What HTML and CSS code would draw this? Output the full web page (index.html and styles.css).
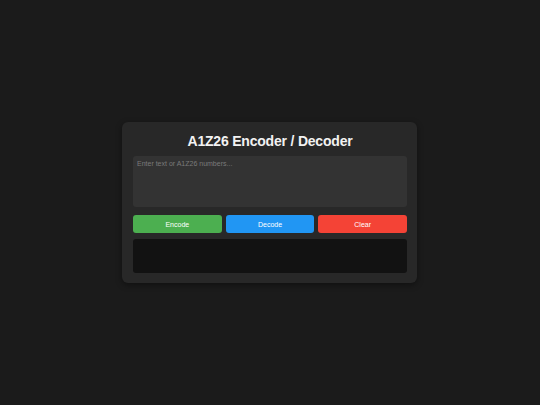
FILE: index.html
```html
<!DOCTYPE html>
<html>
<head>
<meta charset="utf-8">
<link rel="stylesheet" href="styles.css">
</head>
<body>
<div class="card">
  <h1 class="title">A1Z26 Encoder / Decoder</h1>
  <textarea class="input" placeholder="Enter text or A1Z26 numbers..."></textarea>
  <div class="buttons">
    <button class="btn btn-encode">Encode</button>
    <button class="btn btn-decode">Decode</button>
    <button class="btn btn-clear">Clear</button>
  </div>
  <div class="output"></div>
</div>
</body>
</html>
```
FILE: styles.css
```css
html, body {
  margin: 0;
  height: 100%;
}
body {
  background: #1b1b1b;
  font-family: "Liberation Sans", Arial, sans-serif;
  display: flex;
  align-items: center;
  justify-content: center;
}
.card {
  width: 295px;
  margin-right: 1px;
  box-sizing: border-box;
  padding: 10px 10px 10px 11px;
  background: #282828;
  border-radius: 6px;
  box-shadow: 0 2px 6px rgba(0,0,0,0.4);
  display: flex;
  flex-direction: column;
}
.title {
  margin: 0 0 6px;
  font-size: 14px;
  line-height: 18px;
  letter-spacing: -0.2px;
  font-weight: bold;
  color: #f2f2f2;
  text-align: center;
}
.input {
  height: 51px;
  box-sizing: border-box;
  resize: none;
  border: none;
  border-radius: 3px;
  background: #333333;
  color: #eee;
  padding: 4px 4px;
  font-family: "Liberation Sans", Arial, sans-serif;
  font-size: 7px;
  outline: none;
  margin: 0;
}
.input::placeholder {
  color: #7a7a7a;
}
.buttons {
  display: flex;
  gap: 4px;
  margin-top: 8px;
}
.btn {
  flex: 1;
  height: 18px;
  border: none;
  border-radius: 3px;
  color: #fff;
  font-family: "Liberation Sans", Arial, sans-serif;
  font-size: 7px;
  padding: 0;
}
.btn-encode { background: #4caf50; }
.btn-decode { background: #2196f3; }
.btn-clear { background: #f44336; }
.output {
  margin-top: 6px;
  height: 34px;
  background: #121212;
  border-radius: 3px;
}
```
